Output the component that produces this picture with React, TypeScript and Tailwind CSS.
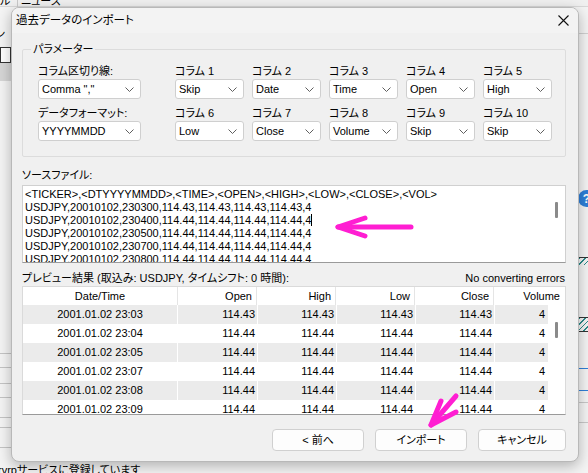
import React from 'react';

const FONT = "font-['Liberation_Sans','Noto_Sans_CJK_JP',sans-serif] [font-feature-settings:'palt']";

function Chevron() {
  return (
    <svg width="9" height="5" viewBox="0 0 9 5" className="shrink-0">
      <path d="M0.5 0.5 L4.5 4.5 L8.5 0.5" fill="none" stroke="#5f5f5f" strokeWidth="1" />
    </svg>
  );
}

function Combo({ value, wide }: { value: string; wide?: boolean }) {
  return (
    <div
      className={`${wide ? 'w-[103px]' : 'w-[69px]'} h-[20px] bg-white border border-[#cfcfcf] rounded-[3px] flex items-center justify-between pl-[3px] pr-[6px] text-[11px] text-black`}
    >
      <span className="leading-none mt-[1px]">{value}</span>
      <Chevron />
    </div>
  );
}

function Field({ label, value, wide }: { label: string; value: string; wide?: boolean }) {
  return (
    <div className="flex flex-col">
      <div className="h-[15px] text-[11px] leading-[14px] text-black">{label}</div>
      <Combo value={value} wide={wide} />
    </div>
  );
}

const row1 = ['Skip', 'Date', 'Time', 'Open', 'High'];
const row2 = ['Low', 'Close', 'Volume', 'Skip', 'Skip'];

const sourceLines = [
  '<TICKER>,<DTYYYYMMDD>,<TIME>,<OPEN>,<HIGH>,<LOW>,<CLOSE>,<VOL>',
  'USDJPY,20010102,230300,114.43,114.43,114.43,114.43,4',
  'USDJPY,20010102,230400,114.44,114.44,114.44,114.44,4',
  'USDJPY,20010102,230500,114.44,114.44,114.44,114.44,4',
  'USDJPY,20010102,230700,114.44,114.44,114.44,114.44,4',
  'USDJPY,20010102,230800,114.44,114.44,114.44,114.44,4',
];

const rows = [
  ['2001.01.02 23:03', '114.43', '114.43', '114.43', '114.43', '4'],
  ['2001.01.02 23:04', '114.44', '114.44', '114.44', '114.44', '4'],
  ['2001.01.02 23:05', '114.44', '114.44', '114.44', '114.44', '4'],
  ['2001.01.02 23:07', '114.44', '114.44', '114.44', '114.44', '4'],
  ['2001.01.02 23:08', '114.44', '114.44', '114.44', '114.44', '4'],
  ['2001.01.02 23:09', '114.44', '114.44', '114.44', '114.44', '4'],
];

function Button({ label, w }: { label: string; w: string }) {
  return (
    <div className={`${w} h-[22px] bg-[#fdfdfd] border border-[#d0d0d0] rounded-[4px] flex items-center justify-center text-[11px] text-black`}>
      {label}
    </div>
  );
}

export default function App() {
  return (
    <div className={`relative w-[588px] h-[473px] overflow-hidden bg-[#f4f4f4] ${FONT}`}>
      {/* background window */}
      <div className="absolute left-0 top-0 w-[588px] h-[7px] bg-[#f0f0f0] border-b border-[#d8d8d8]" />
      <div className="absolute left-0 top-[-6px] text-[11px] leading-[14px] text-black">ル</div>
      <div className="absolute left-[17px] top-0 h-[7px] border-l border-[#c8c8c8]" />
      <div className="absolute left-[21px] top-[-6px] text-[11px] leading-[14px] text-black">ニュース</div>
      <div className="absolute left-[-5px] top-[27px] text-[11px] leading-[14px] text-black">ン</div>
      <div className="absolute left-0 top-[47px] w-[11px] h-[16px] border border-[#333] bg-white" />
      <div className="absolute left-0 top-[63px] w-[11px] h-[18px] bg-[#d6d6d6]" />
      {[353, 367, 383, 397, 417, 427, 447].map((y) => (
        <div key={y} className="absolute left-0 w-[11px] h-px bg-[#c4c4c4]" style={{ top: y }} />
      ))}
      <div className="absolute left-[-2px] top-[463px] text-[11px] leading-[14px] text-black whitespace-nowrap">rvrpサービスに登録しています</div>
      <div className="absolute left-[579px] top-[33px] w-[9px] h-px bg-[#d0d0d0]" />
      <div className="absolute left-[578px] top-[190px] w-[17px] h-[17px] rounded-full bg-[#2f7fd8] flex items-center justify-center text-white text-[12px] font-bold">?</div>
      <div className="absolute left-[579px] top-[257px] w-[9px] h-[8px] border-t border-[#333] bg-[repeating-linear-gradient(135deg,#2a8a8a_0_1px,transparent_1px_4px)]" />
      <div className="absolute left-[579px] top-[317px] w-[9px] h-[15px] border-y border-[#333] bg-[repeating-linear-gradient(135deg,#2a8a8a_0_1px,transparent_1px_4px)]" />
      <div className="absolute left-[579px] top-[368px] w-[9px] h-px bg-[#2f7fd8]" />
      <div className="absolute left-[579px] top-[390px] w-[9px] h-px bg-[#2f7fd8]" />
      <div className="absolute left-[579px] top-[402px] w-[9px] h-px bg-[#c8c8c8]" />
      <div className="absolute left-[579px] top-[422px] w-[9px] h-px bg-[#c8c8c8]" />

      {/* dialog */}
      <div className="absolute left-[11px] top-[7px] w-[568px] h-[455px] bg-[#f0f0f0] border border-[#b8b8b8] rounded-[8px] shadow-[0_4px_14px_rgba(0,0,0,0.28)] flex flex-col overflow-hidden">
        <div className="h-[25px] shrink-0 bg-[#f3f3f3] flex items-center justify-between pl-[4px] pr-[9px]">
          <span className="text-[11.5px] text-black">過去データのインポート</span>
          <svg width="11" height="11" viewBox="0 0 11 11">
            <path d="M0.5 0.5 L10.5 10.5 M10.5 0.5 L0.5 10.5" stroke="#111" strokeWidth="1.1" />
          </svg>
        </div>

        <div className="flex flex-col pl-[10px] pr-[12px]">
          <fieldset className="mt-[9px] border border-[#dcdcdc] rounded-[2px]">
            <legend className="ml-[8px] px-[2px] text-[11px] leading-[14px] text-black">パラメーター</legend>
            <div className="flex pl-[15px] pt-[8px] pb-[15px]">
              <div className="flex flex-col gap-[7px] w-[137px]">
                <Field label="コラム区切り線:" value={'Comma ","'} wide />
                <Field label="データフォーマット:" value="YYYYMMDD" wide />
              </div>
              <div className="flex flex-col gap-[7px]">
                <div className="flex gap-[8px]">
                  {row1.map((v, i) => (
                    <Field key={i} label={`コラム ${i + 1}`} value={v} />
                  ))}
                </div>
                <div className="flex gap-[8px]">
                  {row2.map((v, i) => (
                    <Field key={i} label={`コラム ${i + 6}`} value={v} />
                  ))}
                </div>
              </div>
            </div>
          </fieldset>

          <div className="mt-[11px] mb-[3px] h-[14px] text-[11px] leading-[14px] text-black">ソースファイル:</div>
          <div className="h-[78px] bg-white border border-[#d0d0d0] border-b-[#9a9a9a] flex overflow-hidden">
            <div className="flex-1 pl-[2px] pt-[2px] text-[11px] leading-[13px] text-black whitespace-nowrap overflow-hidden">
              {sourceLines.map((l, i) => (
                <div key={i}>
                  {l}
                  {i === 2 && <span className="inline-block w-px h-[12px] bg-black align-[-2px]" />}
                </div>
              ))}
            </div>
            <div className="w-[17px] flex justify-center">
              <div className="w-[3px] h-[16px] mt-[16px] bg-[#8a8a8a] rounded-[1px]" />
            </div>
          </div>

          <div className="mt-[8px] mb-px h-[14px] flex justify-between text-[11px] leading-[14px] text-black">
            <span>プレビュー結果 (取込み: USDJPY, タイムシフト: 0 時間):</span>
            <span className="pr-[1px]">No converting errors</span>
          </div>
          <div className="h-[129px] bg-white border border-[#dadada] border-b-[#9a9a9a] flex flex-col overflow-hidden text-[11px] text-black">
            <div className="h-[18px] shrink-0 flex bg-white">
              <div className="w-[155px] border-r border-[#e5e5e5] flex items-center justify-center">Date/Time</div>
              {['Open', 'High', 'Low', 'Close'].map((h) => (
                <div key={h} className="w-[79px] border-r border-[#e5e5e5] flex items-center justify-end pr-[4px] first:w-[80px]">
                  {h}
                </div>
              ))}
              <div className="flex-1 flex items-center justify-end pr-[5px]">Volume</div>
            </div>
            <div className="flex flex-1">
              <div className="flex flex-col w-[525px]">
                {rows.map((r, i) => (
                  <div key={i} className={`h-[19px] shrink-0 flex ${i % 2 === 0 ? 'bg-[#ebebeb]' : 'bg-white'}`}>
                    <div className="w-[155px] border-r border-white flex items-center justify-center">{r[0]}</div>
                    <div className="w-[80px] border-r border-white flex items-center justify-end pr-[2px]">{r[1]}</div>
                    <div className="w-[79px] border-r border-white flex items-center justify-end pr-[2px]">{r[2]}</div>
                    <div className="w-[79px] border-r border-white flex items-center justify-end pr-[2px]">{r[3]}</div>
                    <div className="w-[79px] border-r border-white flex items-center justify-end pr-[2px]">{r[4]}</div>
                    <div className="flex-1 flex items-center justify-end pr-[3px]">{r[5]}</div>
                  </div>
                ))}
              </div>
              <div className="flex-1 bg-white flex justify-center">
                <div className="w-[3px] h-[16px] mt-[17px] bg-[#8a8a8a] rounded-[1px]" />
              </div>
            </div>
          </div>

          <div className="mt-[14px] flex justify-end gap-[11px]">
            <Button label="< 前へ" w="w-[92px]" />
            <Button label="インポート" w="w-[92px]" />
            <Button label="キャンセル" w="w-[88px]" />
          </div>
        </div>
      </div>

      {/* annotation arrows */}
      <svg className="absolute left-0 top-0 pointer-events-none" width="588" height="473" viewBox="0 0 588 473">
        <g fill="none" stroke="#ff1ed2" strokeWidth="5" strokeLinecap="round" strokeLinejoin="round">
          <path d="M411 227 L338 227" />
          <path d="M365 218 L338 227 L365 236" />
          <path d="M456 396 L431 425" />
          <path d="M441 401 L431 425 L456 412" />
        </g>
      </svg>
    </div>
  );
}
